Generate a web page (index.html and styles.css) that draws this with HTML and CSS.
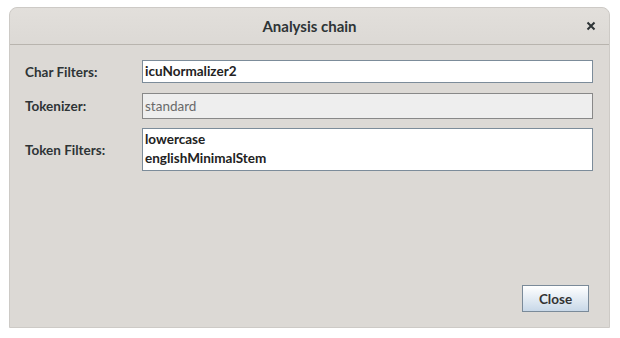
FILE: index.html
```html
<!DOCTYPE html>
<html>
    <head>
        <meta charset="utf-8">
        <title>Analysis chain</title>
        <link rel="stylesheet" href="styles.css">
    </head>
    <body>
    <div class="window">
        <div class="titlebar">
            <span class="title">Analysis chain</span>
            <span class="close-x">
                <svg width="10" height="10" viewBox="0 0 10 10"><path d="M1.5 1.5 L8.5 8.5 M8.5 1.5 L1.5 8.5" stroke="#2e3436" stroke-width="2"/></svg>
            </span>
        </div>
        <div class="content">
            <div class="row">
                <label>Char Filters:</label>
                <div class="field">icuNormalizer2</div>
            </div>
            <div class="row">
                <label>Tokenizer:</label>
                <div class="field disabled">standard</div>
            </div>
            <div class="row">
                <label>Token Filters:</label>
                <div class="field multi">
                    <div>lowercase</div>
                    <div>englishMinimalStem</div>
                </div>
            </div>
            <div class="spacer"></div>
            <div class="buttons">
                <button type="button">Close</button>
            </div>
        </div>
    </div>
    </body>
</html>
```

FILE: styles.css
```css
body {
    margin: 0;
    background-color: #ffffff;
    font-family: Lato, "Noto Sans", sans-serif;
}
.window {
    margin: 7px 10px 0 9px;
    height: 321px;
    display: flex;
    flex-direction: column;
    background-color: #dcd9d5;
    border: 1px solid #cdcac6;
    border-radius: 8px 8px 0 0;
    box-sizing: border-box;
}
.titlebar {
    height: 36px;
    display: flex;
    align-items: center;
    justify-content: center;
    position: relative;
    background: linear-gradient(#e2dfdb, #dcd9d5);
    border-bottom: 1px solid #b8b4ae;
    border-radius: 8px 8px 0 0;
}
.title {
    font-size: 15px;
    font-weight: bold;
    color: #2e3436;
}
.close-x {
    position: absolute;
    right: 13px;
    top: 13px;
    line-height: 0;
}
.content {
    flex: 1;
    display: flex;
    flex-direction: column;
    padding: 15px 16px 15px 15px;
}
.row {
    display: flex;
    align-items: center;
    margin-bottom: 9px;
}
.row:first-child {
    margin-bottom: 10px;
}
label {
    width: 117px;
    font-size: 13.5px;
    font-weight: bold;
    color: #2e3436;
}
.field {
    flex: 1;
    height: 23px;
    box-sizing: border-box;
    background-color: #ffffff;
    border: 1px solid #7c8c9a;
    padding: 2px 2px;
    font-size: 13.5px;
    font-weight: bold;
    color: #222222;
    line-height: 17px;
}
.field.disabled {
    height: 26px;
    background-color: #eeeeee;
    border-color: #888888;
    font-weight: normal;
    color: #6a6a6a;
    line-height: 20px;
}
.field.multi {
    height: 43px;
    line-height: 19px;
    padding-top: 1px;
}
.spacer {
    flex: 1;
}
.buttons {
    display: flex;
    justify-content: flex-end;
    padding-right: 4px;
}
button {
    width: 67px;
    height: 27px;
    font-family: Lato, "Noto Sans", sans-serif;
    font-size: 13.5px;
    font-weight: bold;
    color: #333333;
    background: linear-gradient(#ffffff, #c8d8e8);
    border: 1px solid #7a8a99;
}
```
